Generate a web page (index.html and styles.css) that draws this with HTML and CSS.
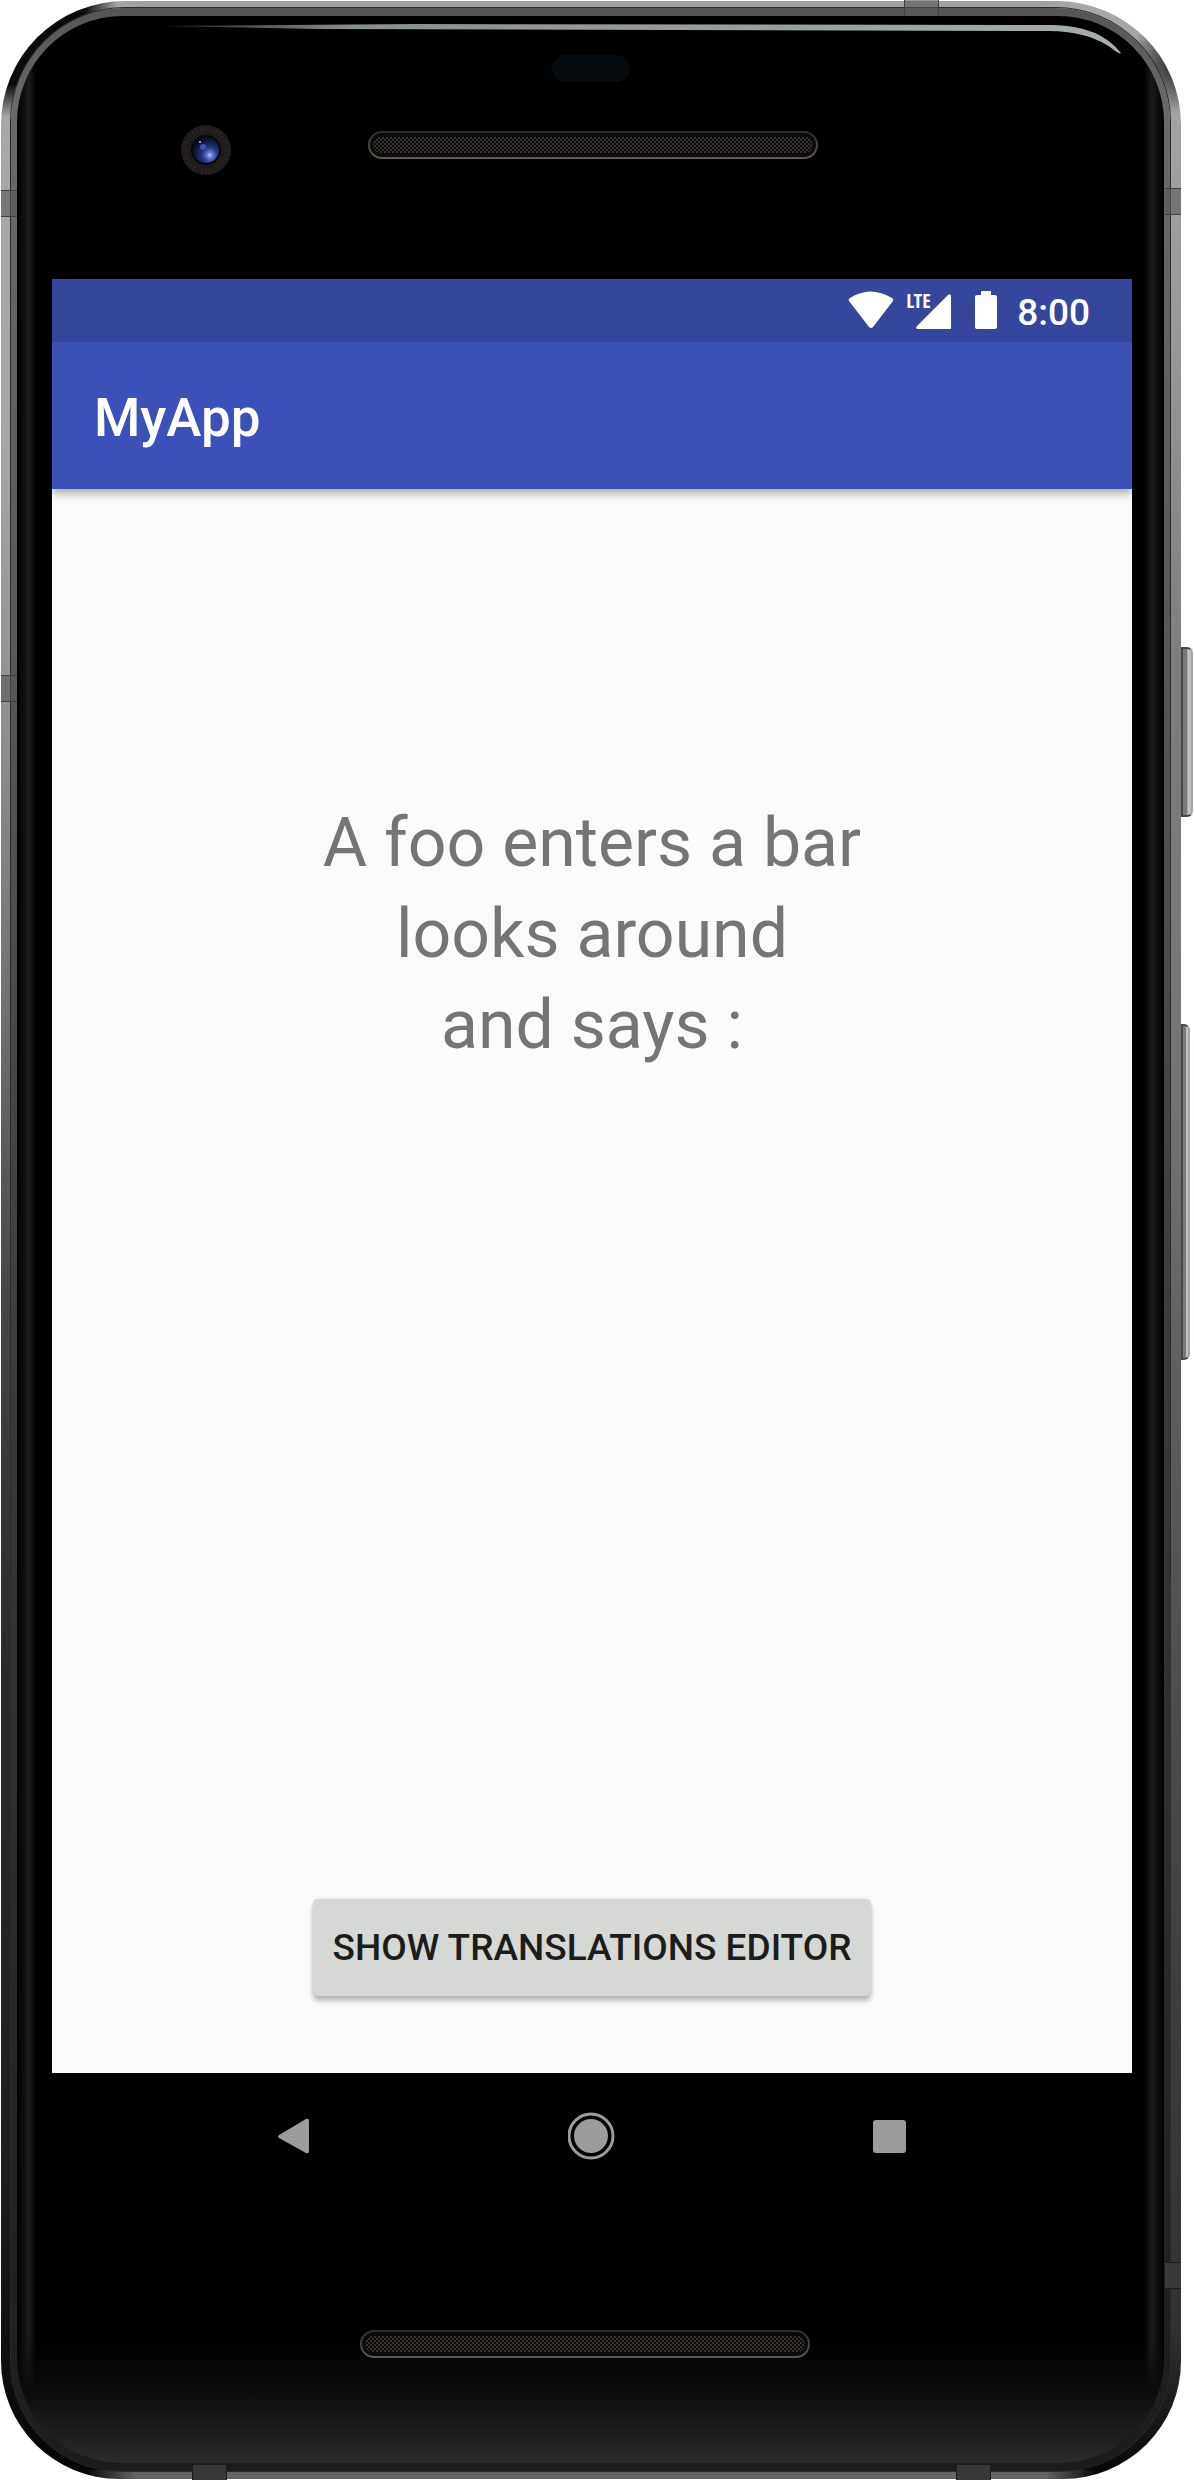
FILE: index.html
```html
<!DOCTYPE html>
<html lang="en">
<head>
<meta charset="utf-8">
<meta name="viewport" content="width=device-width, initial-scale=1">
<title>MyApp</title>
<link rel="stylesheet" href="styles.css">
</head>
<body>
<div class="phone">
  <i class="side-key power"></i>
  <i class="side-key volume"></i>
  <i class="seam seam-top"></i>
  <i class="seam seam-bottom-left"></i>
  <i class="seam seam-bottom-right"></i>
  <i class="seam seam-left-upper"></i>
  <i class="seam seam-left-lower"></i>
  <i class="seam seam-right-upper"></i>
  <i class="seam seam-right-lower"></i>
  <div class="rim">
    <div class="glass">
      <div class="forehead">
        <svg class="glare" viewBox="0 0 1146 60" preserveAspectRatio="none" aria-hidden="true">
          <defs><linearGradient id="glare" x1="0" x2="1" y1="0" y2="0"><stop offset="0" stop-color="#6f7677" stop-opacity=".3"/><stop offset=".2" stop-color="#879091"/><stop offset="1" stop-color="#a7adad"/></linearGradient></defs>
          <path d="M140 10L400 8L1036 9Q1082 10 1103 37Q1100 38 1096 34Q1072 15 1030 15L300 13Z" fill="url(#glare)"/>
        </svg>
        <i class="sensor"></i>
        <svg class="camera" viewBox="0 0 52 52" aria-hidden="true">
          <defs><radialGradient id="lens" cx=".65" cy=".7" r=".75"><stop offset="0" stop-color="#b9c6ff"/><stop offset=".15" stop-color="#6478dc"/><stop offset=".4" stop-color="#273483"/><stop offset=".75" stop-color="#10163f"/><stop offset="1" stop-color="#060817"/></radialGradient></defs>
          <circle cx="26" cy="26" r="25" fill="#1f1b1a"/>
          <circle cx="26" cy="26" r="21" fill="none" stroke="#27221f" stroke-width="6" stroke-dasharray="2 2"/>
          <circle cx="26" cy="26" r="15" fill="#080808"/>
          <circle cx="26" cy="26" r="13" fill="url(#lens)"/>
          <circle cx="23" cy="23" r="3" fill="#4353b0"/>
          <circle cx="20" cy="18" r="1" fill="#b9c6ff"/>
        </svg>
        <svg class="speaker" viewBox="0 0 450 28" aria-hidden="true">
          <defs>
            <pattern id="mesh" width="4" height="4" patternUnits="userSpaceOnUse"><path d="M0 0h2v2H0zM2 2h2v2H2z" fill="#38342f"/></pattern>
            <linearGradient id="lip" x1="0" x2="0" y1="0" y2="1"><stop offset="0" stop-color="#2c2c2c"/><stop offset="1" stop-color="#5b5855"/></linearGradient>
          </defs>
          <rect x="1" y="1" width="448" height="26" rx="13" fill="#0b0a09" stroke="url(#lip)" stroke-width="2"/>
          <rect x="5" y="6" width="440" height="16" rx="8" fill="url(#mesh)"/>
        </svg>
      </div>
      <div class="screen">
        <header class="status-bar">
          <svg class="wifi" viewBox="0 0 46 38" aria-hidden="true"><path d="M1 10Q0 8 2 7Q22-6 44 7Q46 8 45 10L25 36Q23 38 21 36Z" fill="#fff"/></svg>
          <span class="signal">
            <span class="network">LTE</span>
            <svg viewBox="0 0 36 36" aria-hidden="true"><path d="M32 1Q35-1 35 2V35H2Q-1 35 1 32Z" fill="#fff"/></svg>
          </span>
          <svg class="battery" viewBox="0 0 22 38" aria-hidden="true"><path d="M6 0H16V4H20Q22 4 22 6V36Q22 38 20 38H2Q0 38 0 36V6Q0 4 2 4H6Z" fill="#fff"/></svg>
          <time class="clock">8:00</time>
        </header>
        <div class="app-bar"><h1 class="app-title">MyApp</h1></div>
        <main class="content">
          <p class="story">A foo enters a bar<br>looks around<br>and says :</p>
          <button class="action" type="button">SHOW TRANSLATIONS EDITOR</button>
        </main>
      </div>
      <nav class="nav-bar">
        <button class="nav-button" type="button" aria-label="Back"><svg viewBox="0 0 48 48"><path d="M9 23L36 7Q39 6 39 9V39Q39 42 36 41L9 26Q7 25 9 23Z"/></svg></button>
        <button class="nav-button" type="button" aria-label="Home"><svg viewBox="0 0 48 48"><circle cx="23" cy="24" r="17"/><circle class="ring" cx="23" cy="24" r="22"/></svg></button>
        <button class="nav-button" type="button" aria-label="Recent apps"><svg viewBox="0 0 48 48"><rect x="7" y="8" width="33" height="33" rx="3"/></svg></button>
      </nav>
      <div class="chin">
        <svg class="speaker" viewBox="0 0 450 28" aria-hidden="true">
          <rect x="1" y="1" width="448" height="26" rx="13" fill="#0b0a09" stroke="url(#lip)" stroke-width="2"/>
          <rect x="5" y="6" width="440" height="16" rx="8" fill="url(#mesh)"/>
        </svg>
      </div>
    </div>
  </div>
</div>
</body>
</html>
```
FILE: styles.css
```css
* { box-sizing: border-box; }

body {
  margin: 0;
  background: #fff;
  font-family: Roboto, "Liberation Sans", sans-serif;
}

/* Phone body: metal frame, dark rim, black glass */
.phone {
  position: relative;
  margin: 1px 13px 1px 1px;
  padding: 7px 11px 8px 10px;
  border-radius: 124px 124px 118px 118px;
  background:
    radial-gradient(circle at 0 0, #0a0a0a 84px, transparent 116px) 0 0 / 120px 120px no-repeat,
    radial-gradient(circle at 100% 50%, #333 12px, transparent 52px) 100% 0 / 120px 120px no-repeat,
    linear-gradient(90deg, transparent, #a0a29f 40px, #a0a29f calc(100% - 40px), transparent) 50% 0 / 980px 8px no-repeat,
    linear-gradient(90deg, transparent, #646664 50px, #646664 calc(100% - 50px), transparent) 50% 100% / 1010px 9px no-repeat,
    linear-gradient(#a6a9a6, #a3a6a3 18%, #8c8f8c 30%, #6a6d6a 42%, #454745 52%, #2b2d2b 66%, #1c1d1c 88%, #050505) 0 0 / 50% 100% no-repeat,
    linear-gradient(#a6a9a6, #969996 14%, #7c7f7c 26%, #727472 44%, #5a5c5a 58%, #3d3f3d 80%, #303230 94%, #050505) 100% 0 / 50% 100% no-repeat;
}

.rim {
  padding: 8px 6px;
  border-radius: 114px 114px 110px 110px;
  background: linear-gradient(#555654, #6a6b69 4%, #4f504e 35%, #353635 60%, #1c1c1c);
  box-shadow: 0 0 0 1px #2b2b2b;
}

.glass {
  padding: 0 32px 0 35px;
  border-radius: 106px 106px 104px 104px;
  background:
    linear-gradient(transparent, #0b0c0a 40%, #1a1a19 70%, #2b2d2b) 0 100% / 100% 122px no-repeat,
    linear-gradient(90deg, #000, #191a19 12px, #000 19px, #000 calc(100% - 20px), #191a19 calc(100% - 12px), #000);
}

.side-key {
  position: absolute;
  left: 100%;
  border: 2px solid #474947;
  border-right-color: #a2a5a2;
  border-radius: 0 6px 6px 0;
  background: linear-gradient(90deg, #777a77 50%, #c0c3c0 60%);
}
.power { top: 646px; width: 12px; height: 170px; }
.volume { top: 1023px; width: 9px; height: 336px; }

/* Antenna seams */
.seam {
  position: absolute;
  background: rgba(85, 89, 85, .6);
  border: solid #3f413f;
}
.seam-top, .seam-bottom-left, .seam-bottom-right { width: 35px; height: 15px; border-width: 0 1px; }
.seam-top { top: -1px; left: 903px; }
.seam-bottom-left, .seam-bottom-right { bottom: -1px; background: #373937; border-color: #1b1c1b; }
.seam-bottom-left { left: 191px; }
.seam-bottom-right { left: 955px; }
.seam-left-upper, .seam-left-lower, .seam-right-upper, .seam-right-lower { width: 16px; height: 27px; border-width: 1px 0; }
.seam-left-upper { left: 0; top: 189px; }
.seam-left-lower { left: 0; top: 674px; }
.seam-right-upper { right: 0; top: 187px; }
.seam-right-lower { right: 0; top: 2261px; background: #373937; border-color: #1b1c1b; }

.forehead {
  position: relative;
  display: flex;
  align-items: center;
  height: 263px;
}
.glare { position: absolute; top: 0; left: -35px; width: calc(100% + 67px); height: 60px; }
.sensor {
  position: absolute;
  top: 39px;
  left: 50%;
  width: 78px;
  height: 27px;
  margin-left: -40px;
  border-radius: 14px;
  background: #060b0f;
}
.camera { width: 52px; height: 52px; margin: 4px 0 0 128px; }
.speaker { display: block; width: 450px; height: 28px; }
.forehead .speaker { margin: 0 auto 5px 136px; }

.screen { background: #f9fcf9; }

.status-bar {
  display: flex;
  justify-content: flex-end;
  align-items: flex-start;
  height: 63px;
  padding: 12px 42px 0 0;
  background: #35469c;
  color: #fff;
}
.wifi { width: 46px; height: 38px; margin-right: 12px; }
.signal { position: relative; display: flex; justify-content: flex-end; width: 46px; height: 38px; margin-right: 23px; }
.signal svg { width: 36px; height: 36px; margin-top: 3px; }
.network { position: absolute; left: 0; top: 0; font: 700 20px/20px "Open Sans Condensed", "Roboto Condensed", Roboto, sans-serif; }
.battery { width: 22px; height: 38px; margin-right: 20px; }
.clock { font-size: 37px; font-weight: 500; line-height: 44px; }

.app-bar {
  position: relative;
  display: flex;
  align-items: center;
  height: 147px;
  padding: 4px 42px 0;
  background: #3b51b7;
  box-shadow: 0 4px 9px rgba(0, 0, 0, .35);
  clip-path: inset(0 0 -20px);
  color: #fff;
}
.app-title { margin: 0; font-size: 53px; font-weight: 500; line-height: 64px; }

.content {
  display: flex;
  flex-direction: column;
  align-items: center;
  justify-content: space-between;
  min-height: 1584px;
  padding: 309px 42px 77px;
}
.story { margin: 0; color: #737673; font-size: 68px; line-height: 91px; text-align: center; }
.action {
  height: 97px;
  padding: 0 20px;
  border: 0;
  border-radius: 5px;
  background: #d6d8d5;
  box-shadow: 0 5px 5px rgba(0, 0, 0, .25), 0 0 3px rgba(0, 0, 0, .12);
  color: #1c1d1b;
  font: 500 37px/44px Roboto, sans-serif;
}

.nav-bar {
  display: grid;
  grid-template-columns: repeat(3, 298px);
  justify-content: center;
  align-items: center;
  height: 126px;
}
.nav-button { display: grid; place-items: center; padding: 0; border: 0; background: none; }
.nav-button svg { width: 48px; height: 48px; fill: #9c9c9a; }
.nav-button .ring { fill: none; stroke: #9c9c9a; stroke-width: 3; }

.chin { display: flex; justify-content: center; height: 264px; padding: 131px 14px 0 0; }
```
